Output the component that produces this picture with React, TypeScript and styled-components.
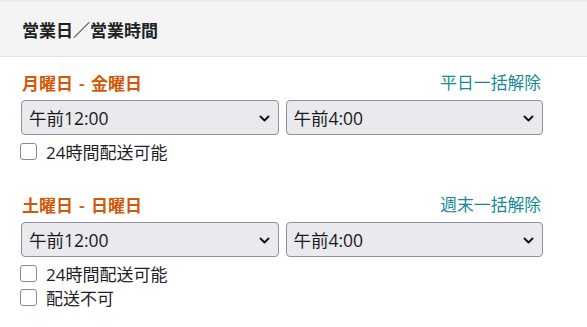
import styled, { createGlobalStyle } from "styled-components";

const GlobalStyle = createGlobalStyle`
  html, body {
    margin: 0;
    padding: 0;
    background: #fff;
  }
  body {
    font-family: "Open Sans", "Noto Sans CJK JP", sans-serif;
    color: #222;
  }
`;

const Panel = styled.div`
  width: 587px;
  min-height: 327px;
  background: #fff;
`;

const Header = styled.div`
  height: 54px;
  display: flex;
  align-items: center;
  padding: 0 22px;
  background: #f4f4f5;
  border-top: 2px solid #e9e9ea;
  border-bottom: 1px solid #e2e2e4;
`;

const Title = styled.h2`
  margin: 0;
  font-size: 17px;
  font-weight: 700;
  color: #222;
  font-family: "Noto Sans CJK JP", sans-serif;
`;

const Body = styled.div`
  padding: 14px 44px 0 21px;
  display: flex;
  flex-direction: column;
  gap: 33px;
`;

const Section = styled.section`
  display: flex;
  flex-direction: column;
`;

const SectionHead = styled.div`
  height: 22px;
  display: flex;
  align-items: center;
  justify-content: space-between;
  margin-bottom: 7px;
`;

const DayRange = styled.span`
  font-family: "Noto Sans CJK JP", sans-serif;
  font-size: 17px;
  font-weight: 700;
  color: #d05a0a;
  padding-left: 1px;
  word-spacing: 2px;
`;

const ClearLink = styled.a`
  font-family: "Noto Sans CJK JP", sans-serif;
  font-size: 16.8px;
  color: #178a98;
  text-decoration: none;
  margin-right: 2px;
  cursor: pointer;
`;

const SelectRow = styled.div`
  display: grid;
  grid-template-columns: 1fr 1fr;
  gap: 7px;
`;

const SelectBox = styled.div`
  position: relative;
  height: 35px;
`;

const Select = styled.select`
  appearance: none;
  width: 100%;
  height: 100%;
  box-sizing: border-box;
  padding: 0 30px 0 7px;
  font-family: "Open Sans", "Noto Sans CJK JP", sans-serif;
  font-size: 17.5px;
  color: #1b1b1b;
  background: #e9e9ee;
  border: 1px solid #8f8f9d;
  border-radius: 4px;
  outline: none;
`;

const Chevron = styled.svg`
  position: absolute;
  right: 9px;
  top: 50%;
  width: 11px;
  height: 7px;
  margin-top: -3px;
  pointer-events: none;
`;

const Checks = styled.div`
  display: flex;
  flex-direction: column;
  gap: 6px;
  margin-top: 7px;
`;

const CheckLabel = styled.label`
  display: flex;
  align-items: center;
  gap: 9px;
  height: 18px;
  font-family: "Open Sans", "Noto Sans CJK JP", sans-serif;
  font-size: 17px;
  color: #1f1f2a;
  cursor: pointer;
`;

const Box = styled.input`
  appearance: none;
  margin: 0 0 0 -1px;
  width: 17px;
  height: 17px;
  box-sizing: border-box;
  border: 1px solid #8a8a8a;
  border-radius: 3px;
  background: #fff;
`;

const times = ["午前12:00", "午前1:00", "午前2:00", "午前3:00", "午前4:00", "午前5:00"];

function TimeSelect({ value }: { value: string }) {
  return (
    <SelectBox>
      <Select defaultValue={value}>
        {times.map((t) => (
          <option key={t}>{t}</option>
        ))}
      </Select>
      <Chevron viewBox="0 0 11 7">
        <path d="M1.5 1.5 L5.5 5.5 L9.5 1.5" fill="none" stroke="#111" strokeWidth="1.9" strokeLinecap="round" strokeLinejoin="round" />
      </Chevron>
    </SelectBox>
  );
}

interface DayGroup {
  range: string;
  clear: string;
  checks: string[];
}

const groups: DayGroup[] = [
  { range: "月曜日 - 金曜日", clear: "平日一括解除", checks: ["24時間配送可能"] },
  { range: "土曜日 - 日曜日", clear: "週末一括解除", checks: ["24時間配送可能", "配送不可"] },
];

export default function App() {
  return (
    <>
      <GlobalStyle />
      <Panel>
        <Header>
          <Title>営業日／営業時間</Title>
        </Header>
        <Body>
          {groups.map((g) => (
            <Section key={g.range}>
              <SectionHead>
                <DayRange>{g.range}</DayRange>
                <ClearLink>{g.clear}</ClearLink>
              </SectionHead>
              <SelectRow>
                <TimeSelect value="午前12:00" />
                <TimeSelect value="午前4:00" />
              </SelectRow>
              <Checks>
                {g.checks.map((c) => (
                  <CheckLabel key={c}>
                    <Box type="checkbox" />
                    {c}
                  </CheckLabel>
                ))}
              </Checks>
            </Section>
          ))}
        </Body>
      </Panel>
    </>
  );
}
